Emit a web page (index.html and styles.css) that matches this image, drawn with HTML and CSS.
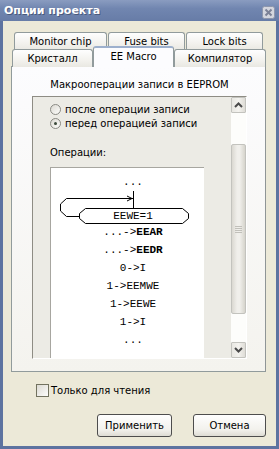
FILE: index.html
```html
<!DOCTYPE html>
<html lang="ru">
<head>
    <meta charset="UTF-8">
    <title>Опции проекта</title>
    <link rel="stylesheet" href="styles.css">
</head>
<body>
    <div class="window">
        <div class="titlebar">
            <span class="title">Опции проекта</span>
            <span class="close">
                <svg width="13" height="13" viewBox="0 0 13 13">
                    <rect x="0.5" y="0.5" width="12" height="12" rx="2" fill="#d4d6de" stroke="#8d96ac"/>
                    <path d="M3.5 3.5 L9.5 9.5 M9.5 3.5 L3.5 9.5" stroke="#7b8196" stroke-width="2"/>
                </svg>
            </span>
        </div>

        <div class="content">
            <!-- tabs -->
            <div class="tabs">
                <div class="tab-row back">
                    <div class="tab w-monitor">Monitor chip</div>
                    <div class="tab w-fuse">Fuse bits</div>
                    <div class="tab w-lock">Lock bits</div>
                </div>
                <div class="tab-row front">
                    <div class="tab w-crystal">Кристалл</div>
                    <div class="tab w-macro selected">EE Macro</div>
                    <div class="tab w-compiler">Компилятор</div>
                </div>
            </div>

            <div class="panel">
                <div class="panel-caption">Макрооперации записи в EEPROM</div>

                <div class="scrollbox">
                    <div class="scroll-content">
                        <label class="radio"><span class="radio-dot"></span>после операции записи</label>
                        <label class="radio"><span class="radio-dot checked"></span>перед операцией записи</label>

                        <div class="ops-label">Операции:</div>

                        <div class="diagram">
                            <div class="op">...</div>
                            <div class="loop">
                                <svg class="loop-svg" width="142" height="32" viewBox="0 0 142 32">
                                    <path d="M71.5 0 V17" stroke="#000" fill="none"/>
                                    <path d="M17 25.5 H4.5 L-1.5 20 V13 L4.5 7.5 H71" stroke="#000" fill="none"/>
                                    <path d="M65 5 L70 7.5 L65 10" stroke="#000" fill="none"/>
                                    <polygon points="23.5,17.5 120.5,17.5 126.5,22.5 126.5,27.5 120.5,32.5 23.5,32.5 17.5,27.5 17.5,22.5" fill="#fff" stroke="#000"/>
                                </svg>
                                <span class="loop-text">EEWE=1</span>
                            </div>
                            <div class="op">...-&gt;<b>EEAR</b></div>
                            <div class="op">...-&gt;<b>EEDR</b></div>
                            <div class="op">0-&gt;I</div>
                            <div class="op">1-&gt;EEMWE</div>
                            <div class="op">1-&gt;EEWE</div>
                            <div class="op">1-&gt;I</div>
                            <div class="op">...</div>
                            <div class="op"></div>
                        </div>
                    </div>

                    <div class="scrollbar">
                        <div class="sb-btn">
                            <svg width="9" height="6" viewBox="0 0 9 6"><path d="M1 5 L4.5 1.5 L8 5" stroke="#4a4a4a" stroke-width="2" fill="none"/></svg>
                        </div>
                        <div class="sb-track top"></div>
                        <div class="sb-thumb"><span class="grip"></span></div>
                        <div class="sb-track bottom"></div>
                        <div class="sb-btn">
                            <svg width="9" height="6" viewBox="0 0 9 6"><path d="M1 1 L4.5 4.5 L8 1" stroke="#4a4a4a" stroke-width="2" fill="none"/></svg>
                        </div>
                    </div>
                </div>
            </div>

            <label class="check"><span class="check-box"></span>Только для чтения</label>

            <div class="buttons">
                <button class="btn apply">Применить</button>
                <button class="btn cancel">Отмена</button>
            </div>
        </div>
    </div>
</body>
</html>
```

FILE: styles.css
```css
body {
    margin: 0;
    padding: 0;
    font-family: 'DejaVu Sans', Verdana, sans-serif;
    font-size: 10px;
    color: #000;
    background: #ece9d8;
}

.window {
    width: 279px;
    height: 449px;
    box-sizing: border-box;
    border: 3px solid #5d73a0;
    border-top: none;
    display: flex;
    flex-direction: column;
    background: #ece9d8;
}

.titlebar {
    height: 21px;
    margin: 0 -3px;
    padding: 0 4px 0 4px;
    display: flex;
    align-items: center;
    justify-content: space-between;
    background: linear-gradient(#8a9cc0, #7186b0 40%, #677ca7);
}

.title {
    color: #fff;
    font-weight: bold;
    font-size: 11px;
    text-shadow: 1px 1px 0 #4a5a7c;
}

.close {
    display: flex;
    margin-top: 3px;
}

.content {
    flex: 1;
    padding: 11px 10px 0 8px;
    display: flex;
    flex-direction: column;
}

/* tabs */
.tab-row {
    display: flex;
    height: 17px;
}

.tab-row.back {
    padding-left: 3px;
    gap: 1px;
}

.tab-row.front {
    padding-left: 1px;
}

.tab {
    box-sizing: border-box;
    height: 18px;
    border: 1px solid #919b9c;
    border-bottom: none;
    border-radius: 3px 3px 0 0;
    background: linear-gradient(#fefefe, #f3f2ee 60%, #e9e8e2);
    text-align: center;
    line-height: 17px;
    position: relative;
}

.tab.selected {
    height: 21px;
    margin-top: -3px;
    background: #fcfcfe;
    border-top: 2px solid #9db0cd;
    line-height: 17px;
    z-index: 2;
}

.w-monitor { width: 93px; }
.w-fuse { width: 77px; }
.w-lock { width: 77px; }
.w-crystal { width: 81px; }
.w-macro { width: 81px; }
.w-compiler { width: 92px; }

/* panel */
.panel {
    height: 306px;
    box-sizing: border-box;
    margin-right: 0;
    border: 1px solid #919b9c;
    border-right-color: #8f9596;
    background: linear-gradient(#fcfcfe, #f4f3ee);
    padding: 0 18px 0 20px;
    display: flex;
    flex-direction: column;
}

.panel-caption {
    text-align: center;
    height: 29px;
    line-height: 36px;
}

.scrollbox {
    height: 263px;
    box-sizing: border-box;
    border: 1px solid;
    border-color: #8e8c84 #fff #fff #8e8c84;
    display: flex;
    background: #ecebe5;
}

.scroll-content {
    flex: 1;
    padding: 0 0 0 17px;
    overflow: hidden;
}

.radio {
    display: flex;
    align-items: center;
    height: 14px;
    gap: 4px;
}

.radio:first-child {
    margin-top: 5px;
}

.radio-dot {
    width: 11px;
    height: 11px;
    box-sizing: border-box;
    border: 1px solid #8a8a84;
    border-radius: 50%;
    background: linear-gradient(135deg, #dcdad3, #fdfdfb);
    display: flex;
    align-items: center;
    justify-content: center;
}

.radio-dot.checked::after {
    content: "";
    width: 3px;
    height: 3px;
    border-radius: 50%;
    background: #3b4a3b;
}

.ops-label {
    margin-top: 16px;
    height: 14px;
    line-height: 14px;
}

.diagram {
    margin-top: 7px;
    width: 154px;
    box-sizing: border-box;
    border-top: 1px solid #a7a6a0;
    border-left: 1px solid #a7a6a0;
    background: #fff;
    padding: 5px 0 0 11px;
    font-family: 'Liberation Mono', 'Courier New', monospace;
    font-size: 11px;
}

.op {
    height: 18px;
    line-height: 18px;
    text-align: center;
    width: 142px;
}

.op b {
    font-weight: bold;
}

.loop {
    position: relative;
    height: 32px;
    width: 142px;
}

.loop-svg {
    display: block;
    overflow: visible;
}

.loop-text {
    position: absolute;
    left: 0;
    right: 0;
    top: 17px;
    height: 16px;
    line-height: 16px;
    text-align: center;
}

/* scrollbar */
.scrollbar {
    width: 15px;
    margin-right: 0;
    display: flex;
    flex-direction: column;
    background: #fdfdfb;
}

.sb-btn {
    height: 16px;
    box-sizing: border-box;
    border: 1px solid #c3c3be;
    border-radius: 1px;
    background: linear-gradient(90deg, #e8e7e2, #f4f3ef 50%, #dedcd6);
    display: flex;
    align-items: center;
    justify-content: center;
}

.sb-track.top {
    height: 31px;
}

.sb-track.bottom {
    flex: 1;
}

.sb-thumb {
    height: 170px;
    box-sizing: border-box;
    border: 1px solid #c3c3be;
    border-radius: 2px;
    background: linear-gradient(90deg, #dad8d1, #f0efeb 40%, #f0efeb 60%, #d6d4cc);
    display: flex;
    align-items: center;
    justify-content: center;
}

.grip {
    width: 7px;
    height: 7px;
    background: repeating-linear-gradient(#c1c0ba 0 1px, transparent 1px 2px);
}

/* bottom */
.check {
    display: flex;
    align-items: center;
    gap: 2px;
    margin: 11px 0 0 25px;
    height: 14px;
}

.check-box {
    width: 13px;
    height: 13px;
    box-sizing: border-box;
    border: 1px solid #72725f;
    background: linear-gradient(135deg, #dcdad3, #fdfdfb);
}

.buttons {
    display: flex;
    justify-content: flex-end;
    gap: 21px;
    margin-top: 17px;
    padding-right: 0;
}

.btn {
    height: 23px;
    border: 1px solid #4d4d4d;
    border-radius: 3px;
    background: linear-gradient(#fefefe, #f2f1ec 70%, #dedcd4);
    font-family: 'DejaVu Sans', Verdana, sans-serif;
    font-size: 10px;
    padding: 0;
}

.btn.apply {
    width: 75px;
}

.btn.cancel {
    width: 73px;
}
```
